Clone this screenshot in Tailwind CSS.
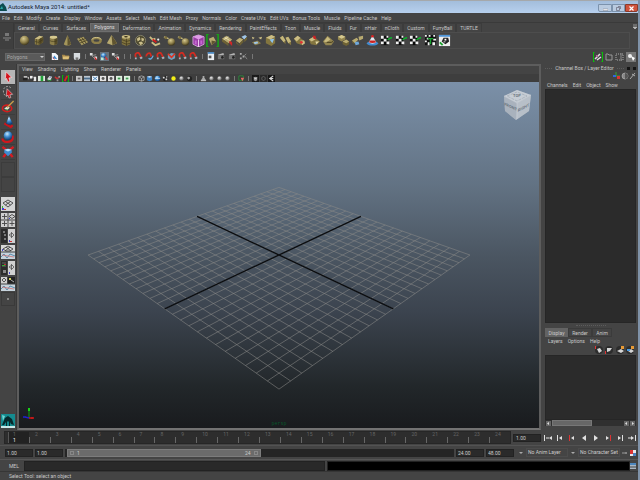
<!DOCTYPE html>
<html lang="en">
<head>
    <meta charset="UTF-8">
    <meta name="viewport" content="width=device-width, initial-scale=1.0">
    <title>Autodesk Maya 2014: untitled*</title>
    <script src="https://cdn.jsdelivr.net/npm/@tailwindcss/browser@4"></script>
</head>
<body class="bg-[#444] text-[#c8c8c8] font-['Roboto','Liberation_Sans',sans-serif] text-[5px] leading-[8px]">
    <!-- icon sprite -->
    <svg class="absolute w-0 h-0">
        <defs>
            <radialGradient id="gold" cx=".4" cy=".3" r=".7"><stop offset="0" stop-color="#d6c98f"/><stop offset=".6" stop-color="#8d7f4a"/><stop offset="1" stop-color="#40381c"/></radialGradient>
            <radialGradient id="blue" cx=".4" cy=".3" r=".7"><stop offset="0" stop-color="#c4e6ff"/><stop offset=".5" stop-color="#3f8cd0"/><stop offset="1" stop-color="#123f78"/></radialGradient>
            <radialGradient id="grey" cx=".4" cy=".3" r=".7"><stop offset="0" stop-color="#eee"/><stop offset="1" stop-color="#555"/></radialGradient>
        </defs>
        <symbol id="sphere" viewBox="0 0 14 14"><circle cx="7" cy="7" r="5" fill="url(#gold)"/></symbol>
        <symbol id="cube" viewBox="0 0 14 14"><path d="M3 5l5-3 4 1v6l-5 3-4-1z" fill="#897b45"/><path d="M3 5l5-3 4 1-5 3z" fill="#cbbd84"/><path d="M7 6l5-3v6l-5 3z" fill="#5c512b"/><path d="M5 5.500v6M3 8l4 1 5-3M9.500 4.500v6" stroke="#3a3218" stroke-width=".6" fill="none"/></symbol>
        <symbol id="cyl" viewBox="0 0 14 14"><path d="M3 3.500v7c1 2 7 2 8 0v-7z" fill="#8d7f4a"/><path d="M8 4h3v6.500L8 12z" fill="#564b27"/><ellipse cx="7" cy="3.500" rx="4" ry="1.600" fill="#d6c98f"/><path d="M3 7c1 1.500 7 1.500 8 0" stroke="#3a3218" stroke-width=".6" fill="none"/></symbol>
        <symbol id="cone" viewBox="0 0 14 14"><path d="M7 1l4 10c-1 2-7 2-8 0z" fill="#a5965a"/><path d="M7 1l4 10-4 1.500z" fill="#5f5430"/></symbol>
        <symbol id="plane" viewBox="0 0 14 14"><path d="M1 5l7-2 5 6-7 3z" fill="#a89a60"/><path d="M3 7.500l7-2.500M4.500 9.500l7-2.500M3.500 4.500l5 6.500M6 3.500l5 6.500" stroke="#3f371c" stroke-width=".8"/></symbol>
        <symbol id="torus" viewBox="0 0 14 14"><ellipse cx="7" cy="7" rx="4.500" ry="2.600" fill="none" stroke="#8d7f4a" stroke-width="2.600"/><path d="M2 6c1-3 9-3 10 0" fill="none" stroke="#d6c98f"/></symbol>
        <symbol id="prism" viewBox="0 0 14 14"><path d="M7 1l6 9-5 2-6-2z" fill="#b8aa70"/><path d="M7 1l6 9-5 2z" fill="#5f5430"/></symbol>
        <symbol id="pipe" viewBox="0 0 14 14"><path d="M3 3l4-2 5 1v9l-4 2-5-2z" fill="#83753f"/><ellipse cx="7.500" cy="3" rx="4.500" ry="2" fill="#cbbd84"/><ellipse cx="7.500" cy="3" rx="2" ry=".8" fill="#3a3218"/><path d="M3 6l5 2 4-1M3 9l5 2 4-1M8 5v8" stroke="#3a3218" stroke-width=".7" fill="none"/></symbol>
        <symbol id="ball" viewBox="0 0 14 14"><circle cx="7" cy="7" r="5.500" fill="#4e492f" stroke="#85836c"/><path d="M3 5l3-2 1 3-3 2zM8 4l3 1-1 3-2-1zM5 9l3-1 2 2-3 2z" fill="#c9bd8a"/></symbol>
        <symbol id="merge" viewBox="0 0 14 14"><path d="M2 3l3 3 3-1M4 9l4 3 5-2" stroke="#cbbd84" stroke-width="2" fill="none"/><path d="M5 6l4 3" stroke="#d21d1d" stroke-width="2"/><circle cx="11" cy="6" r="1.200" fill="#eee"/></symbol>
        <symbol id="spheres" viewBox="0 0 14 14"><circle cx="9" cy="8.500" r="4" fill="url(#gold)"/><path d="M1 3l5 2" stroke="#cbbd84" stroke-width="1.400"/><circle cx="3" cy="4" r="1.600" fill="#7d703e"/></symbol>
        <symbol id="purple" viewBox="0 0 14 14"><path d="M1 3l6-2 6 2v8l-6 3-6-3z" fill="#9b3fa6" stroke="#e3b5ea" stroke-width=".8"/><path d="M1 3l6 3 6-3-6-2z" fill="#dd9be5"/><path d="M7 6v8" stroke="#f2d4f5"/><path d="M4 7v4M10 7v4" stroke="#c468d0" stroke-width="2"/></symbol>
        <symbol id="bracket" viewBox="0 0 14 14"><path d="M3 0H1v14h2M11 0h2v14h-2" stroke="#08c708" stroke-width="1.200" fill="none"/><path d="M3 5l5-2 3 5-5 4z" fill="#b8aa70"/><path d="M6 7l5 1-5 4z" fill="#5f5430"/></symbol>
        <symbol id="extrude" viewBox="0 0 14 14"><path d="M1 5l5-3 6 4-4 4z" fill="#b8aa70"/><path d="M1 5v3l7 5V10z" fill="#6e6234"/><path d="M4 3.500l6 4M3 6l5-3" stroke="#f0e8c0" stroke-width=".8"/><path d="M9 7l3 2v4l-3-3z" fill="#d02727"/></symbol>
        <symbol id="bridge" viewBox="0 0 14 14"><path d="M1 7l4-3 4 2-4 4z" fill="#bbad72"/><path d="M1 7v3l4 3V10l4-4v3l-4 4z" fill="#6b5f33"/><path d="M7 3l4-2 2 2-3 3z" fill="#9fc5e6"/><path d="M10 6l3-3v3l-3 3z" fill="#6e6234"/></symbol>
        <symbol id="append" viewBox="0 0 14 14"><path d="M2 3l3 1-2 2zM9 4l4-1-1 3z" fill="#cbbd84"/><path d="M2 9l6-2 4 3-6 2z" fill="#8d7f4a"/><path d="M4 9l4-1 1 2-4 1z" fill="#9fc5e6"/></symbol>
        <symbol id="wedge" viewBox="0 0 14 14"><path d="M2 4l6-3 4 2v7l-4 3-6-3z" fill="#83753f"/><path d="M2 4l6-3 4 2-5 3z" fill="#cbbd84"/><path d="M6 6l5-1-2 5z" fill="#8fc4ee"/></symbol>
        <symbol id="blocks" viewBox="0 0 14 14"><path d="M1 4l3-2 3 5v4L5 9zM7 4l3-1 3 5v4l-3-2z" fill="#83753f"/><path d="M1 4l3-2 3 5-2 2zM7 4l3-1 3 5-3 2z" fill="#c4b67b"/></symbol>
        <symbol id="redblock" viewBox="0 0 14 14"><path d="M1 5l4-3 8 6-3 4-6-2z" fill="#83753f"/><path d="M1 5l4-3 3 2-4 4zM8 7l4 0 1 3-3 2z" fill="#cbbd84"/><circle cx="9" cy="9" r="1.500" fill="#e03434"/></symbol>
        <symbol id="redtop" viewBox="0 0 14 14"><path d="M1 6l5-3 7 5-4 4-6-1z" fill="#83753f"/><path d="M1 6l5-3 3 2-5 3z" fill="#cbbd84"/><path d="M5 2h3l1 4-3-1z" fill="#c72626"/><path d="M8 8l4 0-3 3z" fill="#e4d9a8"/></symbol>
        <symbol id="wave" viewBox="0 0 14 14"><path d="M1 8l5-6 7 6-3 4-6 0z" fill="#938550"/><path d="M2 8l4-5 3 3-4 3z" fill="#c9bb80"/><path d="M5 9l5 0 2-1" stroke="#40381c" fill="none"/></symbol>
        <symbol id="cubes" viewBox="0 0 14 14"><path d="M1 3l4-2 4 2v3L5 8 1 6z" fill="#93854e"/><path d="M1 3l4-2 4 2-4 2z" fill="#d6c98f"/><path d="M6 8l4-2 3 2v3l-3 2-4-2z" fill="#6e6234"/><path d="M6 8l4-2 3 2-3 2z" fill="#bbad72"/></symbol>
        <symbol id="corner" viewBox="0 0 14 14"><path d="M1 7l5-3 2 2-4 4zM8 3l5-1v3l-4 2z" fill="#b8aa70"/><path d="M4 9l4-1 1 3-4 1z" fill="#6fa8db"/><path d="M1 7v2l3 2v-1z" fill="#6e6234"/></symbol>
        <symbol id="boat" viewBox="0 0 14 14"><ellipse cx="7" cy="10" rx="6" ry="2.500" fill="#3f8cd0"/><path d="M7 2l4 7c-2 2-6 2-8 0z" fill="#dfe8f0"/><path d="M4.500 7l5 0 1.500 2c-2 1-6 1-8 0z" fill="#c22"/><circle cx="7" cy="2.500" r="1.400" fill="#d22"/></symbol>
        <symbol id="check" viewBox="0 0 14 14"><path d="M1 2h8v10H1z" fill="#0a0a0a"/><path d="M1 2h3v3H1zM7 2h2v2H7zM4 5h3v3H4zM1 8h3v3H1zM7 8h3v3H7z" fill="#f0f0f0"/><path d="M8 6c2 0 2-2 5-2" stroke="#0db52c" stroke-width="1.500" fill="none"/></symbol>
        <symbol id="check2" viewBox="0 0 14 14"><path d="M1 1h12v11H1z" fill="#111"/><path d="M1 1h2v2H1zM5 1h2v2H5zM10 1h2v2h-2zM3 4h2v2H3zM10 5h3v2h-3zM1 7h2v2H1zM4 9h2v3H4zM9 9h3v3H9z" fill="#f4f4f4"/><path d="M4 5h6M7 5v6" stroke="#18a52e" stroke-width="1.500"/></symbol>
        <symbol id="uvwin" viewBox="0 0 14 14"><path d="M1 1h12v12H1z" fill="#eee"/><path d="M1 1h12v2H1z" fill="#4f95d8"/><path d="M6 4l5 0 1 4-4 3-4-3z" fill="#222"/><path d="M7 5h2v2H7zM6 8h2v1H6z" fill="#fff"/><path d="M2 9l3 3" stroke="#1ca02f" stroke-width="2"/></symbol>

        <symbol id="new" viewBox="0 0 10 10"><path d="M2 1h4l3 3v5H2z" fill="#f2f6fa"/><path d="M3 7l2-3 3 4z" fill="#3b8ad0"/><path d="M3 6l2 2" stroke="#d22"/></symbol>
        <symbol id="open" viewBox="0 0 10 10"><path d="M1 3h3l1 1h4v4H2z" fill="#a8894a"/><path d="M2 5h7.500L8 8H2z" fill="#ddc078"/></symbol>
        <symbol id="save" viewBox="0 0 10 10"><path d="M2 1h7v6L7 9H3L2 7z" fill="#d8dce0"/><path d="M4 6h3v3H4z" fill="#777"/></symbol>
        <symbol id="hier" viewBox="0 0 10 10"><path d="M1 1h3v3H1zM6 5h3v3H6z" fill="#ddd"/><path d="M3 4l5-1M3 4l3 3" stroke="#999"/><path d="M6 5l3 3-2 1z" fill="#d22"/></symbol>
        <symbol id="objsel" viewBox="0 0 10 10"><path d="M0 0h10v10H0z" fill="#66727d"/><circle cx="4" cy="4" r="3" fill="url(#blue)"/><path d="M5 4l4 4-2 1z" fill="#e03030"/><path d="M1 6h3v3H1z" fill="#b9eadb"/></symbol>
        <symbol id="magnet" viewBox="0 0 10 10"><path d="M2 6L1.500 4C1 1 5 0 6 2l2 4" fill="none" stroke="#d22c22" stroke-width="2"/><path d="M6 6l3-1 .5 2-2 1zM1 6h2v2H1z" fill="#a9b2ba"/></symbol>
        <symbol id="magblue" viewBox="0 0 10 10"><path d="M1.500 5C1 2 5 0 6 2l1 3" fill="none" stroke="#d22c22" stroke-width="2"/><path d="M4 7c2 2 4 0 5-3" stroke="#64a8dc" stroke-width="1.500" fill="none"/></symbol>
        <symbol id="magcube" viewBox="0 0 10 10"><path d="M1 3l4-2 4 1v5L5 9 1 7z" fill="#6fa0bd"/><path d="M1 2l4 4 4-4" stroke="#dc3322" stroke-width="1.800" fill="none"/></symbol>
        <symbol id="clap" viewBox="0 0 10 10"><path d="M1 4h7v4H1z" fill="#777"/><path d="M1 3l6-2 1 2-6 1z" fill="#b5b5b5"/><circle cx="6" cy="6" r="1.500" fill="#222"/></symbol>
        <symbol id="input" viewBox="0 0 10 10"><path d="M2 0h7v9H2z" fill="#e9eef3"/><path d="M2 0h7v2H2z" fill="#4c8ac2"/><path d="M3 4h3v3H3z" fill="#555"/></symbol>
        <symbol id="dots" viewBox="0 0 10 10"><path d="M1 1h2v2H1zM1 6h2v2H1zM4 4h2v2H4z" fill="#aaa"/><path d="M6 4l3 4M8 2L6 4" stroke="#888"/></symbol>
        <symbol id="greenb" viewBox="0 0 10 10"><path d="M2 0H.5v10H2M8 0h1.500v10H8" stroke="#09c309" fill="none"/><path d="M2 7l5-5M4 8l4-3" stroke="#ddd" stroke-width="1.500"/><path d="M3 3h2v2H3z" fill="#b06a9a"/></symbol>
        <symbol id="folder2" viewBox="0 0 10 10"><path d="M2 2h2l1 1h3v5H2z" fill="none" stroke="#9a9a9a"/></symbol>
        <symbol id="dash" viewBox="0 0 10 10"><path d="M1 2h7v6H1z" fill="none" stroke="#aaa" stroke-dasharray="1 1"/><path d="M6 1v8" stroke="#888"/></symbol>
        <symbol id="chan" viewBox="0 0 10 10"><path d="M0 0h10v10H0z" fill="#777"/><circle cx="4" cy="4" r="2" fill="#eee"/><path d="M5 4l4 2-2 3z" fill="#fff"/></symbol>

        <symbol id="cam" viewBox="0 0 8 8"><path d="M1 3h5v3H1z" fill="#222"/><path d="M2 1h4v2H2zM6 3l2-1v3z" fill="#bbb"/></symbol>
        <symbol id="film" viewBox="0 0 8 8"><path d="M0 1h3v3H0z" fill="#eee"/><path d="M4 2h3v5H4z" fill="#e8e8e8"/><path d="M3 3h1v3H3z" fill="#222"/></symbol>
        <symbol id="greenp" viewBox="0 0 8 8"><path d="M0 1h8v6H0z" fill="#dfe8df"/><path d="M3 1h3v6H3z" fill="#23a03a"/></symbol>
        <symbol id="pan" viewBox="0 0 8 8"><path d="M1 5l3-4 3 1-2 4z" fill="#ddd"/><path d="M1 5l3 2 3-2" stroke="#2a9a3c" fill="none"/><path d="M4 3l2-1" stroke="#456fb0"/></symbol>
        <symbol id="pencil" viewBox="0 0 8 8"><path d="M1 2l2 2 3-1" stroke="#c33" fill="none" stroke-width="1.500"/><path d="M5 1h2v2H5zM3 5h2v2H3z" fill="#999"/></symbol>
        <symbol id="redg" viewBox="0 0 8 8"><path d="M2 0H.5v8H2M6 0h1.500v8H6" stroke="#08c408" fill="none"/><path d="M3 7l3-6" stroke="#d22" stroke-width="2"/></symbol>
        <symbol id="gate" viewBox="0 0 8 8"><path d="M0 1h7v6H0z" fill="#c9c9c9"/><path d="M2 3h3v2H2z" fill="#666"/></symbol>
        <symbol id="gateb" viewBox="0 0 8 8"><path d="M0 1h7v6H0z" fill="#b9c4ce"/><path d="M0 3h7v2H0z" fill="#4d6f8e"/></symbol>
        <symbol id="gatex" viewBox="0 0 8 8"><path d="M0 1h7v6H0z" fill="#eef3f7"/><path d="M1 2l5 4M6 2L1 6" stroke="#3474ae"/></symbol>
        <symbol id="gateo" viewBox="0 0 8 8"><path d="M0 1h7v6H0z" fill="#e5e5e5"/><circle cx="3.500" cy="4" r="1.700" fill="#555"/></symbol>
        <symbol id="gateg" viewBox="0 0 8 8"><path d="M0 1h7v6H0z" fill="#dff0e0"/><path d="M2 3h3v2H2z" fill="#3c9a50"/></symbol>
        <symbol id="wire" viewBox="0 0 8 8"><path d="M1 2l3-1 3 1v4L4 7 1 6zM1 2l3 2 3-2M4 4v3" fill="#444" stroke="#bbb" stroke-width=".8"/></symbol>
        <symbol id="bcube" viewBox="0 0 8 8"><path d="M1 2l3-1 3 1v4L4 7 1 6z" fill="#3f86ca"/><path d="M1 2l3-1 3 1-3 1z" fill="#c8e4fb"/></symbol>
        <symbol id="bball" viewBox="0 0 8 8"><circle cx="4" cy="4" r="3.200" fill="url(#blue)"/><path d="M1 4h6" stroke="#dcedfb" stroke-width=".7"/></symbol>
        <symbol id="tex" viewBox="0 0 8 8"><circle cx="4" cy="4" r="3.200" fill="#222"/><path d="M1 2h2v2H1zM4 4h2v2H4zM5 1h1v2H5z" fill="#ddd"/></symbol>
        <symbol id="light" viewBox="0 0 8 8"><circle cx="4" cy="4" r="2.500" fill="#f2ee17"/></symbol>
        <symbol id="gball" viewBox="0 0 8 8"><circle cx="4" cy="4" r="2.500" fill="url(#grey)"/></symbol>
        <symbol id="dball" viewBox="0 0 8 8"><circle cx="4" cy="4" r="3" fill="#222"/><circle cx="3" cy="3.500" r="1.500" fill="#aaa"/></symbol>
        <symbol id="stand" viewBox="0 0 8 8"><path d="M3 1h2v2l2 3H1l2-3z" fill="#aaa"/><path d="M1 6h6v1H1z" fill="#ddd"/></symbol>
        <symbol id="redsq" viewBox="0 0 8 8"><path d="M1 1h5v5H1z" fill="#333" stroke="#2c8f3d"/><path d="M3 3h4L5 7z" fill="#e66"/></symbol>
        <symbol id="share" viewBox="0 0 8 8"><path d="M0 0h8v8H0z" fill="#161616"/><path d="M6 1L2 4l4 3M2 4h4" stroke="#ddd" fill="none" stroke-width="1.300"/></symbol>
        <symbol id="ghost" viewBox="0 0 8 8"><path d="M0 0h8v8H0z" fill="#2a2a2a"/><path d="M2 4c0-3 4-3 4 0s-4 3-4 0" stroke="#666" fill="none"/></symbol>
        <symbol id="cyc" viewBox="0 0 8 8"><path d="M0 0h8v8H0z" fill="#1a1a1a"/><path d="M2 3l2-1 2 1v3L4 7 2 6z" fill="#999"/><path d="M2 3l2 1 2-1" stroke="#fff" fill="none" stroke-width=".7"/></symbol>

        <symbol id="t-select" viewBox="0 0 14 15"><path d="M5 2l6 6-3 .5L9 12l-2 1-1.500-4L4 10z" fill="#d3131c" stroke="#fff" stroke-width=".6"/></symbol>
        <symbol id="t-lasso" viewBox="0 0 14 15"><path d="M10 3C7 0 2 2 2 6s2 6 4 6" fill="none" stroke="#a8a8a8" stroke-dasharray="2 1.500"/><path d="M6 4l6 6-3 .5 1 3-2 .5-1-3-2 1z" fill="#d3131c" stroke="#ddd" stroke-width=".6"/></symbol>
        <symbol id="t-paint" viewBox="0 0 14 15"><ellipse cx="6" cy="9" rx="5" ry="3.500" fill="#444" stroke="#d31d1d" stroke-width="1.700"/><path d="M3 9l3-2 3 1-3 3z" fill="#e5e5d5"/><path d="M6 8l7-7" stroke="#c99d4a" stroke-width="1.400"/><path d="M4 10l3 1" stroke="#38a44a"/></symbol>
        <symbol id="t-move" viewBox="0 0 14 15"><path d="M3 9l7 4 2-2" stroke="#c9151b" stroke-width="2.400" fill="none"/><path d="M8 1l4 8c-2 2-6 1-7 0z" fill="url(#blue)"/></symbol>
        <symbol id="t-rot" viewBox="0 0 14 15"><path d="M1 9c0 5 9 5 11 1V6" stroke="#d1161c" stroke-width="2.200" fill="none"/><circle cx="7" cy="6" r="4.600" fill="url(#blue)"/></symbol>
        <symbol id="t-scale" viewBox="0 0 14 15"><path d="M1 2l4 3M13 2L9 5M2 13l3-4M12 13L9 9" stroke="#d41c22" stroke-width="2.600"/><path d="M3 5l4-1 4 1v3l-4 4-4-4z" fill="#3f8cd0"/><path d="M3 5l4-1 4 1-4 2z" fill="#b9ddf7"/></symbol>
        <symbol id="l-persp" viewBox="0 0 14 14"><path d="M0 0h14v14H0z" fill="#d4d4d4"/><path d="M2 6l5-3 5 3-5 4zM4.500 4.500l5 3.500M9.500 4.500l-5 3.500" fill="none" stroke="#444" stroke-width=".9"/><path d="M1 11h2v2H1z" fill="#44c"/><path d="M3 12h2v1H3z" fill="#c33"/><path d="M1 9h1v2H1z" fill="#3b3"/></symbol>
        <symbol id="l-four" viewBox="0 0 14 14"><path d="M0 0h6.500v6.500H0zM7.500 0H14v6.500H7.500zM0 7.500h6.500V14H0zM7.500 7.500H14V14H7.500z" fill="#d0d0d0"/><path d="M1 3.500h5M3.500 1v5M1 10.500h5M3.500 8v5M8.500 10.500h5M11 8v5M8 3.500l3-2 3 2-3 2z" stroke="#444" fill="none" stroke-width=".9"/><path d="M8 5h1v1H8z" fill="#44c"/></symbol>
        <symbol id="l-out" viewBox="0 0 14 14"><path d="M0 0h6v14H0z" fill="#2b2b2b"/><path d="M2 2h2v2H2zM3 5h2v2H3zM3 9h2v2H3z" fill="#777"/><path d="M7 0h7v14H7z" fill="#d0d0d0"/><path d="M8 6l3-2 2 2-2 2zM10.500 3v6" stroke="#555" stroke-width=".8" fill="none"/><path d="M8 11h1v2H8z" fill="#44c"/><path d="M9 12h2v1H9z" fill="#c33"/></symbol>
        <symbol id="l-graph" viewBox="0 0 14 14"><path d="M0 0h14v6.500H0z" fill="#d6d6d6"/><path d="M2 4l5-3 5 3-3 2H5zM5 2l5 4M9 2L4 6" stroke="#333" stroke-width=".8" fill="none"/><path d="M0 7.500h14V14H0z" fill="#c7d3dc"/><path d="M0 12l3-3 3 4 3-4 5 2" stroke="#417ba0" stroke-width=".8" fill="none"/><path d="M1 10l12 2" stroke="#c66" stroke-width=".7"/><path d="M1 4h1v2H1z" fill="#44c"/></symbol>
        <symbol id="l-hyper" viewBox="0 0 14 14"><path d="M0 0h6v14H0z" fill="#2b2b2b"/><path d="M1 2h4M1 5h4" stroke="#666"/><path d="M3 3h2v1H3z" fill="#b33"/><path d="M1 4h3v1H1z" fill="#3a3"/><path d="M2 9h3v3H2z" fill="#888"/><path d="M7 0h7v14H7z" fill="#d0d0d0"/><path d="M8 6l3-2 2 2-2 2zM10.500 3v6" stroke="#555" stroke-width=".8" fill="none"/><path d="M8 11h1v2H8z" fill="#44c"/></symbol>
        <symbol id="l-three" viewBox="0 0 14 14"><path d="M0 0h6v6.500H0z" fill="#d0d0d0"/><path d="M1 3l2-2 2 2-2 2z" stroke="#555" fill="none"/><path d="M7 0h7v6.500H7z" fill="#222"/><path d="M8 1h2v2H8z" fill="#cfcf5a"/><path d="M10 3l3 2" stroke="#aaa"/><path d="M0 7.500h14V14H0z" fill="#c7d3dc"/><path d="M0 12l3-3 3 4 3-4 5 2" stroke="#417ba0" stroke-width=".8" fill="none"/><path d="M1 10l12 2" stroke="#c66" stroke-width=".7"/></symbol>
        <symbol id="maya" viewBox="0 0 14 14"><path d="M0 0h14v14H0z" fill="#158b8f"/><path d="M0 12h14v2H0z" fill="#c8e8e8"/><path d="M1 11L4 4l3-2 4 3 2 6-3-1-1-2v4H8V8L7 7 6 8v4H5V8l-2 3z" fill="#06282b"/><path d="M1 1l3 1-2 5z" fill="#70d5d3"/></symbol>
    </svg>

    <div class="min-h-screen flex flex-col border-r-2 border-[#7f92a8]">
        <!-- title bar -->
        <header class="h-[13px] flex items-center border-t border-[#a5a8ab] bg-gradient-to-b from-[#a3bddb] to-[#b7d0ee] text-[#15202c] text-[6px]">
            <svg class="w-[7px] h-2" viewBox="0 0 7 8"><path d="M0 2l3-2 3 4 1 4H0z" fill="#0d4c50"/><path d="M0 6l2-3 1 3z" fill="#2aa9a5"/></svg>
            <h1 class="flex-1 pl-px">Autodesk Maya 2014: untitled*</h1>
            <div class="flex self-start h-2 mt-[3px] text-white">
                <button aria-label="Minimize" class="w-[14px] grid place-items-center border border-[#7c93ad] rounded-bl-xs bg-[#b9cbe0]"><svg class="w-[5px] h-[5px]" viewBox="0 0 5 5"><path d="M0 3h5v1.500H0z" fill="#fff" stroke="#445" stroke-width=".3"/></svg></button>
                <button aria-label="Restore" class="w-[13px] grid place-items-center border border-[#7c93ad] bg-[#b9cbe0]"><svg class="w-[5px] h-[5px]" viewBox="0 0 5 5"><path d="M.5 1.500h3v3h-3zM2 .5h2.500V3" fill="none" stroke="#667" stroke-width=".7"/></svg></button>
                <button aria-label="Close" class="w-[13px] grid place-items-center border border-[#8a3a2a] rounded-br-xs bg-[#d0533c]"><svg class="w-[5px] h-[5px]" viewBox="0 0 5 5"><path d="M.5.5l4 4M4.500.5l-4 4" stroke="#fff" stroke-width="1.200"/></svg></button>
            </div>
        </header>

        <nav class="h-[9px] flex gap-1 pl-[2px] bg-[#444] whitespace-nowrap">
            <button>File</button><button>Edit</button><button>Modify</button><button>Create</button><button>Display</button><button>Window</button><button>Assets</button><button>Select</button><button>Mesh</button><button>Edit Mesh</button><button>Proxy</button><button>Normals</button><button>Color</button><button>Create UVs</button><button>Edit UVs</button><button>Bonus Tools</button><button>Muscle</button><button>Pipeline Cache</button><button>Help</button>
        </nav>

        <!-- shelf -->
        <section class="flex h-[27px] border-t border-[#3a3a3a]">
            <div class="w-[14px] flex flex-col items-center justify-center gap-[2px] bg-[#3f3f3f] border-r border-[#383838]">
                <svg class="w-2 h-3" viewBox="0 0 8 12"><path d="M2 3h4v3H2z" fill="#777"/><path d="M0 8h8M2 10h4" stroke="#888"/></svg>
            </div>
            <div class="flex-1 flex flex-col">
                <div id="tabs" class="flex h-[9px] whitespace-nowrap"></div>
                <div class="flex-1 mr-[2px] pl-[2px] border border-[#4d4d4d]">
                    <div id="shelf" class="grid grid-cols-30 w-[435px] h-[14px] items-center justify-items-center"></div>
                </div>
            </div>
            <svg class="w-[6px] h-2" viewBox="0 0 6 8"><path d="M1 2h4M1 4h4l-2 2z" stroke="#bbb" fill="#bbb" stroke-width=".7"/></svg>
        </section>

        <!-- status line -->
        <section class="h-[15px] flex items-center pl-[5px] pr-[2px] text-[#aaa]">
            <div class="relative">
                <select aria-label="Menu set" class="appearance-none block w-10 h-2 pl-px bg-[#5a5a5a] border border-[#666] leading-[6px]"><option>Polygons</option></select>
                <svg class="absolute right-px top-[2px] w-1 h-1 pointer-events-none" viewBox="0 0 4 4"><path d="M0 1h4L2 3z" fill="#ccc"/></svg>
            </div>
            <div id="status" class="flex items-center pl-1"></div>
            <div id="statusRight" class="flex items-center ml-auto"></div>
        </section>

        <main class="flex-1 flex">
            <!-- toolbox -->
            <aside class="w-[17px] flex flex-col items-center pt-[6px] border-r border-[#393939]">
                <div id="tools" class="flex flex-col"></div>
                <div class="w-[14px] h-[15px] mt-[2px] border border-[#3c3c3c]"></div>
                <div class="w-[14px] h-[15px] border border-[#3c3c3c]"></div>
                <div id="layouts" class="flex flex-col gap-[2px] mt-[5px]"></div>
                <div class="w-[14px] h-[14px] mt-px grid place-items-center border border-[#3a3a3a]"><span class="size-[2px] bg-[#888]"></span></div>
                <svg class="w-[14px] h-[14px] mt-auto mb-[2px]"><use href="#maya"/></svg>
            </aside>

            <!-- viewport -->
            <section class="flex-1 flex flex-col border-2 border-[#5d5d5d] border-b-[#737373]">
                <nav class="h-2 flex items-start gap-[5px] pl-[3px] bg-[#444] leading-[6px]">
                    <button>View</button><button>Shading</button><button>Lighting</button><button>Show</button><button>Renderer</button><button>Panels</button>
                </nav>
                <div id="panelBar" class="h-2 flex items-center pl-[2px] bg-[#3e3e3e]"></div>
                <div class="relative flex-1 bg-[linear-gradient(#7b90a8_0%,#627283_30%,#4b5662_50%,#3b434e_67%,#22272a_88%,#191b1e_100%)]">
                    <svg class="absolute inset-0 w-full h-full" viewBox="0 0 520 348">
                        <path id="gridLines" stroke="#8a8a88" stroke-opacity=".7" stroke-width=".8" fill="none"/>
                        <path id="gridAxes" stroke="#0b0d10" stroke-width="1.400" fill="none"/>
                    </svg>
                    <svg class="absolute right-[5px] top-[7px] w-[32px] h-[32px]" viewBox="0 0 32 32">
                        <path d="M2 7L15 1l14 5-2 16-13 9L3 22z" fill="#9ba6b3"/>
                        <path d="M2 7L15 1l14 5-14 8z" fill="#c6cdd5"/>
                        <path d="M2 7l13 7-1 17L3 22z" fill="#a9b2bd"/>
                        <path d="M15 14l14-8-2 16-13 9z" fill="#b7bfc8"/>
                        <path d="M2 7l13 7 14-8M15 14v16" stroke="#ccd2d9" stroke-width=".6" fill="none"/>
                        <path d="M5 7l10-4 10 4-10 5z" stroke="#98a2ad" stroke-width=".6" stroke-dasharray="3 1" fill="none"/>
                        <g fill="#6b7580" font-size="4" font-family="Roboto" font-weight="700" text-anchor="middle">
                            <text x="15" y="8">TOP</text>
                            <text transform="matrix(1 .45 0 1 8.500 19)">FRONT</text>
                            <text transform="matrix(1 -.5 0 1 21.500 20)">RIGHT</text>
                        </g>
                    </svg>
                    <svg class="absolute left-[3px] bottom-[7px] w-[14px] h-[13px]" viewBox="0 0 14 13">
                        <path d="M7 3v7" stroke="#10a010"/><path d="M6 0h2v3H6z" fill="#18d018"/>
                        <path d="M7 10l5 0M10 9v2" stroke="#d01818" stroke-width="1.400"/><path d="M7 10l-4-1M1 9h3" stroke="#2020d0" stroke-width="1.400"/>
                    </svg>
                    <span class="absolute bottom-px inset-x-0 text-center text-[#08572b] font-['Liberation_Mono',monospace] leading-[6px]">persp</span>
                </div>
            </section>

            <!-- channel box / layer editor -->
            <aside class="w-[97px] flex flex-col pl-1 pr-[2px]">
                <div class="h-2 flex items-center gap-[3px]">
                    <span class="flex-1 border-t border-dotted border-[#5c5c5c]"></span>
                    <h2>Channel Box / Layer Editor</h2>
                    <span class="flex-1 border-t border-dotted border-[#5c5c5c]"></span>
                    <button aria-label="Float" class="size-[3px] bg-[#151515]"></button>
                    <button aria-label="Close panel" class="size-[3px] bg-[#151515]"></button>
                </div>
                <svg class="self-end w-6 h-2" viewBox="0 0 24 8"><path d="M4 0v4h4" stroke="#3a3" fill="none"/><path d="M1 3h3v2H1z" fill="#36d"/><path d="M5 4h3v3H5z" fill="#d33"/><circle cx="13" cy="4" r="3" fill="#888" stroke="#bbb" stroke-width=".6"/><path d="M13 1a3 3 0 0 1 0 6z" fill="#555"/><path d="M18 7l5-6M20 2l3 2" stroke="#aaa"/></svg>
                <nav class="h-[9px] flex gap-[5px] pl-[2px]">
                    <button>Channels</button><button>Edit</button><button>Object</button><button>Show</button>
                </nav>
                <div class="flex-1 bg-[#2b2b2b] border border-[#262626]"></div>
                <div class="mx-auto my-[2px] w-[30px] border-t border-dotted border-[#5c5c5c]"></div>
                <div class="h-[9px] flex">
                    <button class="w-[23px] bg-[#636363]">Display</button><button class="w-[24px] border border-[#3b3b3b] leading-[6px]">Render</button><button class="w-[20px] border border-[#3b3b3b] leading-[6px]">Anim</button>
                </div>
                <nav class="h-2 flex gap-[5px] pl-[3px]">
                    <button>Layers</button><button>Options</button><button>Help</button>
                </nav>
                <svg class="self-end w-[41px] h-[10px] mr-px" viewBox="0 0 41 10"><g fill="#2c2c2c"><circle cx="5" cy="5" r="4"/><circle cx="15" cy="5" r="4"/><circle cx="26" cy="5" r="4"/><circle cx="36" cy="5" r="4"/></g><path d="M3 4l3-1 2 3-3 2zM13 3h5l-2 3-3 1zM23 6l4-2 3 2-3 2zM34 6l3-2 3 2-3 2z" fill="#d5d5d5"/><path d="M1 1h1v3H1zM11 6h1v3h-1z" fill="#d33"/><path d="M27 1h3v3h-3zM37 1h3v3h-3z" fill="#e79a35"/><path d="M33 4h3v2h-3z" fill="#4b9be0"/></svg>
                <div class="h-[65px] bg-[#2b2b2b] border border-[#262626]"></div>
                <div class="h-[6px] flex items-center gap-px px-px mb-[4px] bg-[#303030]">
                    <button aria-label="Scroll left" class="size-[5px] bg-[#666]"><svg viewBox="0 0 5 5"><path d="M3 1v3L1 2.500z" fill="#ddd"/></svg></button>
                    <div class="flex-1"><div class="w-[40px] h-[6px] bg-[#676767] border border-[#777]"></div></div>
                    <button aria-label="Scroll back" class="size-[5px] bg-[#666]"><svg viewBox="0 0 5 5"><path d="M3 1v3L1 2.500z" fill="#ddd"/></svg></button>
                    <button aria-label="Scroll right" class="size-[5px] bg-[#666]"><svg viewBox="0 0 5 5"><path d="M2 1v3l2-1.500z" fill="#ddd"/></svg></button>
                </div>
            </aside>
        </main>

        <!-- time slider -->
        <section class="h-[15px] flex items-center pl-1 pr-[2px]">
            <div id="time" class="flex-1 h-[13px] grid grid-cols-[3px_repeat(24,minmax(0,21fr))] bg-[#2d2d2d] border border-[#262626] text-[#666] leading-[5px]">
                <span></span>
            </div>
            <input aria-label="Current time" value="1.00" class="w-7 h-2 ml-[2px] pl-[2px] bg-[#2a2a2a] border border-[#222] text-[#ccc]">
            <div class="w-[92px] h-[6px] ml-[3px] flex justify-between text-[#e0e0e0]">
                <button aria-label="Go to start"><svg class="w-2 h-[6px]" viewBox="0 0 8 6"><path d="M0 0h1v6H0zM2 2.500h1v1H2zM5 3l3-2v4zM3 2.500h2v1H3z" fill="currentColor"/></svg></button>
                <button aria-label="Step back frame"><svg class="w-2 h-[6px]" viewBox="0 0 8 6"><path d="M1 0h1v6H1zM3 3l3-2v4z" fill="currentColor"/></svg></button>
                <button aria-label="Step back key"><svg class="w-2 h-[6px]" viewBox="0 0 8 6"><path d="M1 0h1v6H1z" fill="#d33"/><path d="M3 3l3-2v4z" fill="currentColor"/></svg></button>
                <button aria-label="Play backwards"><svg class="w-2 h-[6px]" viewBox="0 0 8 6"><path d="M2 3l4-3v6z" fill="currentColor"/></svg></button>
                <button aria-label="Play forwards"><svg class="w-2 h-[6px]" viewBox="0 0 8 6"><path d="M6 3L2 0v6z" fill="currentColor"/></svg></button>
                <button aria-label="Step forward key"><svg class="w-2 h-[6px]" viewBox="0 0 8 6"><path d="M6 0h1v6H6z" fill="#d33"/><path d="M5 3L2 1v4z" fill="currentColor"/></svg></button>
                <button aria-label="Step forward frame"><svg class="w-2 h-[6px]" viewBox="0 0 8 6"><path d="M6 0h1v6H6zM5 3L2 1v4z" fill="currentColor"/></svg></button>
                <button aria-label="Go to end"><svg class="w-2 h-[6px]" viewBox="0 0 8 6"><path d="M7 0h1v6H7zM0 2.500h3v1H0zM6 3L3 1v4z" fill="currentColor"/></svg></button>
            </div>
        </section>

        <!-- range slider -->
        <section class="h-[14px] flex items-center gap-[2px] pl-[5px] pr-[2px] border-t border-[#525252] text-[#ccc]">
            <input aria-label="Animation start" value="1.00" class="w-7 h-2 pl-px bg-[#2a2a2a] border border-[#222]">
            <input aria-label="Playback start" value="1.00" class="w-7 h-2 pl-px bg-[#2a2a2a] border border-[#222]">
            <div class="flex-1 h-2 pl-[2px] bg-[#252525]">
                <div class="w-1/2 h-2 flex items-center justify-between px-[2px] bg-[#6b6b6b] border border-[#7c7c7c]">
                    <span class="flex items-center gap-[3px]"><i class="size-1 border border-[#888]"></i>1</span>
                    <span class="flex items-center gap-[3px]">24<i class="size-1 border border-[#888]"></i></span>
                </div>
            </div>
            <input aria-label="Playback end" value="24.00" class="w-7 h-2 pl-px bg-[#2a2a2a] border border-[#222]">
            <input aria-label="Animation end" value="48.00" class="w-7 h-2 pl-px bg-[#2a2a2a] border border-[#222]">
            <svg class="w-2 h-1" viewBox="0 0 8 4"><path d="M3 1h4L5 3z" fill="#aaa"/></svg>
            <button class="w-[42px] h-[9px] text-left pl-px border border-[#4c4c4c] leading-[7px]">No Anim Layer</button>
            <svg class="w-[6px] h-1" viewBox="0 0 6 4"><path d="M1 1h4L3 3z" fill="#aaa"/></svg>
            <button class="w-[42px] h-[9px] text-left pl-px border border-[#4c4c4c] leading-[7px] whitespace-nowrap">No Character Set</button>
            <svg class="w-[14px] h-2" viewBox="0 0 14 8"><path d="M0 4h5M4 3v2" stroke="#999"/><path d="M8 1h6v6H8z" fill="#e8e8ee"/><path d="M8 1h3v4H8z" fill="#d33"/><path d="M11 4h3v3h-3z" fill="#4a80c0"/></svg>
        </section>

        <!-- command line -->
        <section class="h-[12px] flex items-center pl-[9px] pr-[2px] border-t border-[#565656]">
            <label for="mel" class="w-[15px]">MEL</label>
            <input id="mel" class="flex-1 h-[10px] bg-[#292929] border border-[#222]">
            <output class="w-[303px] h-[10px] ml-[2px] bg-black border border-[#222]"></output>
            <svg class="w-[6px] h-2" viewBox="0 0 6 8"><path d="M0 1h6v6H0z" fill="#aab6c2"/><path d="M0 1h6v2H0z" fill="#4c86bd"/><path d="M0 5h6" stroke="#444"/></svg>
        </section>
        <footer class="h-[9px] pl-[9px] border-t border-[#363636]">Select Tool: select an object</footer>
    </div>

    <script>
        const tabNames = ["General", "Curves", "Surfaces", "Polygons", "Deformation", "Animation", "Dynamics", "Rendering", "PaintEffects", "Toon", "Muscle", "Fluids", "Fur", "nHair", "nCloth", "Custom", "FurryBall", "TURTLE"];
        document.getElementById('tabs').innerHTML = tabNames.map(name =>
            name === "Polygons"
                ? `<button class="px-[3px] bg-[#636363] text-[#ddd] border border-[#6e6e6e] leading-[7px]">${name}</button>`
                : `<button class="px-[3px] border border-[#3c3c3c] border-b-0 leading-[7px]">${name}</button>`
        ).join("");

        const fill = (id, names, cls, size) => {
            document.getElementById(id).innerHTML = names.map(name =>
                name === "|"
                    ? `<span class="w-[6px] h-[5px] flex justify-center"><i class="w-px bg-[#777]"></i></span>`
                    : `<button aria-label="${name}" class="${cls}"><svg class="${size}"><use href="#${name}"/></svg></button>`
            ).join("");
        }

        fill('shelf', ["sphere", "cube", "cyl", "cone", "plane", "torus", "prism", "pipe", "ball", "merge", "spheres", "spheres", "purple", "bracket", "extrude", "bridge", "append", "wedge", "blocks", "redblock", "redtop", "wave", "cubes", "corner", "boat", "check", "check", "check", "check2", "uvwin"], "block", "w-[13px] h-[13px]");
        fill('status', ["new", "open", "save", "|", "hier", "objsel", "hier", "|", "|", "magnet", "magblue", "magnet", "magcube", "magnet", "magnet", "|", "input", "clap", "clap", "dots", "|"], "w-[11px] grid place-items-center", "w-[9px] h-[9px]");
        fill('statusRight', ["greenb", "folder2", "dash", "chan"], "w-[11px] grid place-items-center", "w-[10px] h-[10px]");
        fill('panelBar', ["cam", "film", "greenp", "pan", "pencil", "redg", "|", "gate", "gateb", "gatex", "gateo", "gateo", "gateg", "gateg", "|", "wire", "bcube", "bball", "tex", "light", "gball", "dball", "|", "stand", "gball", "gball", "gball", "|", "redsq", "|", "cyc", "ghost", "share"], "w-2 grid place-items-center", "w-[7px] h-[7px]");
        fill('tools', ["t-select", "t-lasso", "t-paint", "t-move", "t-rot", "t-scale"], "block border-b border-[#3c3c3c] first:bg-[#b5b5b5]", "w-[14px] h-[14px]");
        fill('layouts', ["l-persp", "l-four", "l-out", "l-graph", "l-hyper", "l-three"], "block", "w-[14px] h-[14px]");

        const time = document.getElementById('time');
        for (let i = 1; i <= 24; i++) {
            time.innerHTML += i === 1
                ? `<span class="flex flex-col justify-between pl-[4px] border-l border-[#555] bg-[#222]"><span>1</span><b class="text-white font-normal">1</b></span>`
                : `<span class="flex flex-col justify-between"><span class="pl-[6px]">${i}</span><i class="w-px h-[6px] bg-[#666]"></i></span>`;
        }

        // ground plane, 24 x 24 cells, a and b run from -1 to 1
        const project = (a, b) => {
            const w = 1 + 0.165 * (a + b);
            return (260 + 96 * (a - b) / w).toFixed(1) + " " + (174 - 45.2 * (a + b) / w).toFixed(1);
        }
        let d = "";
        for (let i = -12; i <= 12; i++) {
            const t = i / 12;
            d += `M${project(t, -1)}L${project(t, 1)}M${project(-1, t)}L${project(1, t)}`;
        }
        document.getElementById('gridLines').setAttribute("d", d);
        document.getElementById('gridAxes').setAttribute("d", `M${project(0, -1)}L${project(0, 1)}M${project(-1, 0)}L${project(1, 0)}`);
    </script>
</body>
</html>
